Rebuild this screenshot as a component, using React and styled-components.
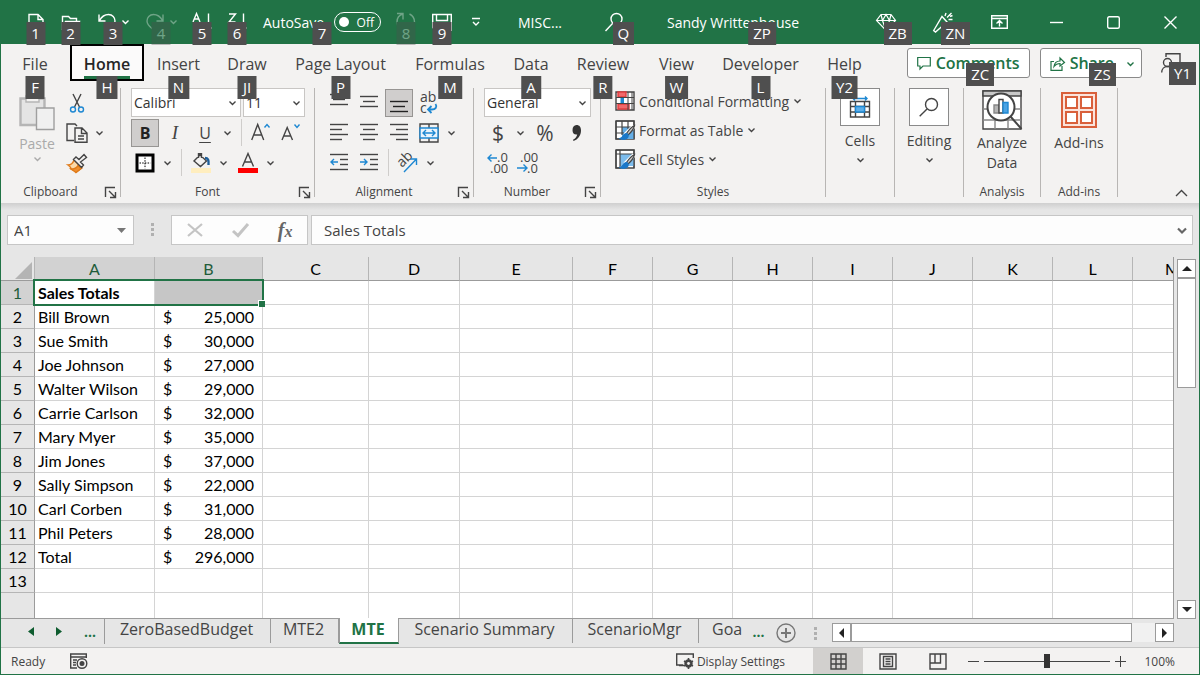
import React from 'react'
import styled, { createGlobalStyle, css } from 'styled-components'

const GREEN = '#217346'
const BLUE = '#1e88d2'

const tabs = [
    { name: 'File', tip: 'F', width: 68 },
    { name: 'Home', tip: 'H', width: 74 },
    { name: 'Insert', tip: 'N', width: 69 },
    { name: 'Draw', tip: 'JI', width: 68 },
    { name: 'Page Layout', tip: 'P', width: 119 },
    { name: 'Formulas', tip: 'M', width: 100 },
    { name: 'Data', tip: 'A', width: 62 },
    { name: 'Review', tip: 'R', width: 82 },
    { name: 'View', tip: 'W', width: 65 },
    { name: 'Developer', tip: 'L', width: 103 },
    { name: 'Help', tip: 'Y2', width: 65 },
]

const columns = [
    ['A', 120], ['B', 108], ['C', 106], ['D', 91], ['E', 113], ['F', 80],
    ['G', 80], ['H', 80], ['I', 80], ['J', 80], ['K', 80], ['L', 80],
    ['M', 80],
]

const rows = [
    ['Sales Totals', ''],
    ['Bill Brown', '25,000'],
    ['Sue Smith', '30,000'],
    ['Joe Johnson', '27,000'],
    ['Walter Wilson', '29,000'],
    ['Carrie Carlson', '32,000'],
    ['Mary Myer', '35,000'],
    ['Jim Jones', '37,000'],
    ['Sally Simpson', '22,000'],
    ['Carl Corben', '31,000'],
    ['Phil Peters', '28,000'],
    ['Total', '296,000'],
    ['', ''],
]

const sheets = [
    { name: 'ZeroBasedBudget', width: 166 },
    { name: 'MTE2', width: 68 },
    { name: 'MTE', width: 60, active: true },
    { name: 'Scenario Summary', width: 174 },
    { name: 'ScenarioMgr', width: 126 },
    { name: 'Goa', width: 46 },
]

function Icon({ w = 20, h = 20, children }) {
    return (
        <Svg width={w} height={h} viewBox={`0 0 ${w} ${h}`} aria-hidden="true">
            {children}
        </Svg>
    )
}

const Chevron = () => (
    <Icon w={9} h={6}><path d="M1.5 1.5l3 3 3-3" /></Icon>
)

const Launcher = () => (
    <LauncherButton aria-label="More options">
        <Icon w={11} h={11}>
            <path d="M.5 10V.5H10M4 4l6 6M10.500 5v5.500H5" />
        </Icon>
    </LauncherButton>
)

// horizontal rules, given as [y, x1, x2]
const Lines = ({ rules }) => (
    <>{rules.map(([y, a, b]) => <path key={y} d={`M${a} ${y}.5H${b}`} strokeWidth="1.400" />)}</>
)

const AlignIcon = ({ rules }) => <Icon><Lines rules={rules} /></Icon>

function TitleBar() {
    return (
        <TitleRow>
            <QuickButton $w={35} aria-label="New">
                <Icon><path d="M3 18V2.500h9l5 5V18zM12 2.500v5h5" /></Icon>
                <KeyTip>1</KeyTip>
            </QuickButton>
            <QuickButton $w={35} aria-label="Open">
                <Icon><path d="M1.500 17V4.500h6l2 2h6v3M1.500 17l3-7.500h14l-3 7.500z" /></Icon>
                <KeyTip>2</KeyTip>
            </QuickButton>
            <QuickButton $w={50} aria-label="Undo">
                <Icon><path d="M2 2.500v6.500h6.500M2.500 8.500C5 4 8 2.500 11.500 2.500c4 0 6.500 3 6.500 6.500 0 5-5 7-8 10" /></Icon>
                <Chevron />
                <KeyTip>3</KeyTip>
            </QuickButton>
            <QuickButton $w={46} $dim aria-label="Redo">
                <Icon><path d="M18 2.500v6.500h-6.500M17.500 8.500C15 4 12 2.500 8.500 2.500 4.500 2.500 2 5.500 2 9c0 5 5 7 8 10" /></Icon>
                <Chevron />
                <KeyTip>4</KeyTip>
            </QuickButton>
            <QuickButton $w={36} aria-label="Sort A to Z">
                <Icon><path d="M1 10l3.500-8.500L8 10M2.500 7h4M16.500 1.500v17l-3-3M16.500 18.500l3-3" /></Icon>
                <KeyTip>5</KeyTip>
            </QuickButton>
            <QuickButton $w={34} aria-label="Sort Z to A">
                <Icon><path d="M2 2h6.500L2 10h6.500M16.500 1.500v17l-3-3M16.500 18.500l3-3" /></Icon>
                <KeyTip>6</KeyTip>
            </QuickButton>
            <AutoSave>
                AutoSave
                <HiddenCheck type="checkbox" />
                <Pill><Knob />Off</Pill>
                <KeyTip>7</KeyTip>
            </AutoSave>
            <QuickButton $w={36} $dim aria-label="Refresh">
                <Icon w={22}><path d="M2 1.500h6v6M8 2C4 3 2 6 2 10c0 5 4 8.500 8.500 8.500S19.500 15 19.500 10c0-4-2-6.500-5-8" /></Icon>
                <KeyTip>8</KeyTip>
            </QuickButton>
            <QuickButton $w={36} aria-label="Save">
                <Icon><path d="M.7 2.500h18.600v15.800H3.500L.7 15.500zM4.500 2.500v6h11v-6M5 18v-6h10v6" /></Icon>
                <KeyTip>9</KeyTip>
            </QuickButton>
            <QuickButton $w={32} aria-label="Customize toolbar">
                <Icon w={10} h={10}><path d="M1 1.500h8M2 5l3 3 3-3" /></Icon>
            </QuickButton>
            <TitleMiddle>
                <span>MISC...</span>
                <QuickButton $w={20} aria-label="Search">
                    <Icon h={22}><circle cx="11.500" cy="8" r="5.500" /><path d="M7.500 12.500L.5 20" /></Icon>
                    <KeyTip $end>Q</KeyTip>
                </QuickButton>
                <UserButton>
                    Sandy Writtenhouse
                    <KeyTip>ZP</KeyTip>
                </UserButton>
            </TitleMiddle>
            <QuickButton $w={57} aria-label="Premium">
                <Icon><path d="M5 2.500h10l4.500 6L10 18.500.5 8.500zM.5 8.500h19M5 2.500l1.500 6L10 18.500l3.500-10 1.500-6M6.500 8.500L10 2.500l3.500 6" strokeWidth="1.200" /></Icon>
                <KeyTip $end>ZB</KeyTip>
            </QuickButton>
            <QuickButton $w={57} aria-label="What's new">
                <Icon h={22}><path d="M.7 19.500L9 5.500l5 5.500L2.500 21zM12 5l1-3M15.500 8.500h4M14 6.500l4.500-4.500M17 5.500l2.500-1" /></Icon>
                <KeyTip $end>ZN</KeyTip>
            </QuickButton>
            <QuickButton $w={57} aria-label="Ribbon display options">
                <Icon w={17} h={14}><path d="M.7.700h15.600v12.600H.700zM.7 3.500h15.600M8.500 11.500V5.500M5.500 8.500l3-3 3 3" /></Icon>
            </QuickButton>
            <QuickButton $w={57} aria-label="Minimize">
                <Icon w={13} h={13}><path d="M0 6.500h13" /></Icon>
            </QuickButton>
            <QuickButton $w={57} aria-label="Maximize">
                <Icon w={13} h={13}><rect x=".7" y=".7" width="11.600" height="11.600" rx="1.500" /></Icon>
            </QuickButton>
            <QuickButton $w={57} aria-label="Close">
                <Icon w={13} h={13}><path d="M.5.500l12 12M12.500.500l-12 12" /></Icon>
            </QuickButton>
        </TitleRow>
    )
}

function TabBar() {
    return (
        <TabRow>
            {tabs.map((t) => (
                <Tab key={t.name} $w={t.width} $active={t.name === 'Home'}>
                    <span>{t.name}</span>
                    <KeyTip $low>{t.tip}</KeyTip>
                </Tab>
            ))}
            <TabActions>
                <ActionBox>
                    <ActionButton>
                        <Icon w={14} h={14}><path d="M.7 1.500h12.600v8.500H6l-3 3v-3H.700z" strokeWidth="1.200" /></Icon>
                        Comments
                    </ActionButton>
                    <KeyTip $mid $end>ZC</KeyTip>
                </ActionBox>
                <ActionBox>
                    <ActionButton>
                        <Icon w={15} h={15}><path d="M4 5.500H1v8.800h11V10M4 10.500c.5-4 3-5.500 6-5.500V2l4.500 4.500L10 10V7.500c-3 0-4.500 1-6 3z" strokeWidth="1.200" /></Icon>
                        Share
                    </ActionButton>
                    <ShareArrow aria-label="Share options"><Chevron /></ShareArrow>
                    <KeyTip $mid $end>ZS</KeyTip>
                </ActionBox>
                <PersonButton aria-label="Account">
                    <Icon w={20} h={20}>
                        <path d="M5 4V.700h14v10.500h-3l-2 2.500" />
                        <circle cx="6.500" cy="9.500" r="4" />
                        <path d="M.7 19.500c0-3.500 2.500-6 5.800-6s5.800 2.500 5.800 6" />
                    </Icon>
                    <KeyTip $mid $end>Y1</KeyTip>
                </PersonButton>
            </TabActions>
        </TabRow>
    )
}

function ClipboardGroup() {
    return (
        <Group $w={120}>
            <GroupBody>
                <PasteButton disabled>
                    <Icon w={36} h={36}>
                        <path d="M1.500 3.500H25.500V30H1.500z" fill="#e4e4e4" stroke="#b5b5b5" strokeWidth="2.400" />
                        <path d="M7 1h13v6H7z" fill="#f3f2f1" stroke="#b5b5b5" />
                        <path d="M17.500 13h17.500v21.500H17.500z" fill="#f0f0f0" stroke="#9f9f9f" />
                    </Icon>
                    Paste
                    <Chevron />
                </PasteButton>
                <ToolRows>
                    <ToolRow>
                        <Tool aria-label="Cut">
                            <Icon>
                                <path d="M6 1l6.500 13M14 1L7.500 14" />
                                <g stroke={BLUE}><circle cx="6" cy="16.500" r="2.500" /><circle cx="14" cy="16.500" r="2.500" /></g>
                            </Icon>
                        </Tool>
                    </ToolRow>
                    <ToolRow>
                        <Tool aria-label="Copy">
                            <Icon w={22}>
                                <path d="M8 17.500H1V1h8l2 2" />
                                <path d="M9 5h7l5 5v9.300H9zM15.500 5v5.500H21M12 13h6M12 16h6" />
                            </Icon>
                        </Tool>
                        <DropArrow aria-label="Copy options"><Chevron /></DropArrow>
                    </ToolRow>
                    <ToolRow>
                        <Tool aria-label="Format painter">
                            <Icon>
                                <path d="M7 7l8 8-6 4.500c-1-2-3-3-5-3.500 0-1.500-1.500-3-3-4 3 0 5-2 6-5z" fill="#fbd9a8" stroke="#e07b1a" />
                                <path d="M4 16l5 3.500 5-4-3-3c-1 2-4 3.500-7 3.500z" fill="#ef8f2e" stroke="#e07b1a" />
                                <path d="M6.500 6.500l8 8 2-2.500-3-3 6-4.500-2.500-3-5 5-3-2.500z" fill="#f3f2f1" />
                            </Icon>
                        </Tool>
                    </ToolRow>
                </ToolRows>
            </GroupBody>
            <GroupLabel>Clipboard<Launcher /></GroupLabel>
        </Group>
    )
}

function FontGroup() {
    return (
        <Group $w={194}>
            <GroupBody>
                <ToolRows>
                    <ToolRow>
                        <SelectBox $w={110}>
                            <select aria-label="Font"><option>Calibri</option></select>
                            <Chevron />
                        </SelectBox>
                        <SelectBox $w={62}>
                            <select aria-label="Font size"><option>11</option></select>
                            <Chevron />
                        </SelectBox>
                    </ToolRow>
                    <ToolRow>
                        <Tool $on $letter="bold">B</Tool>
                        <Tool $letter="italic">I</Tool>
                        <Tool $letter="underline">U</Tool>
                        <DropArrow aria-label="Underline options"><Chevron /></DropArrow>
                        <Divider />
                        <Tool aria-label="Increase font size">
                            <Icon><path d="M.7 17L6.700 1.500 12.700 17M3 12h7.500" /><path d="M13.500 4.500l2.500-3 2.500 3" stroke={BLUE} /></Icon>
                        </Tool>
                        <Tool aria-label="Decrease font size">
                            <Icon><path d="M1 17L6.200 4.500 11.500 17M3 13h6.500" /><path d="M13.500 1.500l2.500 3 2.500-3" stroke={BLUE} /></Icon>
                        </Tool>
                    </ToolRow>
                    <ToolRow>
                        <Tool aria-label="Borders">
                            <Icon>
                                <rect x="2" y="2" width="16" height="16" fill="#fff" stroke="#000" strokeWidth="3" />
                                <path d="M10 4.500v11M4.500 10h11" stroke="#000" strokeDasharray="1.500 1.200" strokeWidth="1" />
                            </Icon>
                        </Tool>
                        <DropArrow aria-label="Border options"><Chevron /></DropArrow>
                        <Divider />
                        <Tool aria-label="Fill color">
                            <Icon>
                                <path d="M9 2l6.500 6-6 5.500L3 8zM7.500 5V.700h3V5" />
                                <path d="M14 5c3 0 4 2 3.500 7" stroke="#1f5f99" strokeWidth="2.400" />
                                <path d="M0 17.500h20" stroke="#ffeebf" strokeWidth="5" />
                            </Icon>
                        </Tool>
                        <DropArrow aria-label="Fill options"><Chevron /></DropArrow>
                        <Tool aria-label="Font color">
                            <Icon>
                                <path d="M4.500 13.500L10 .5l5.500 13M6.500 9h7" />
                                <path d="M0 17.500h20" stroke="#fe0000" strokeWidth="5" />
                            </Icon>
                        </Tool>
                        <DropArrow aria-label="Font color options"><Chevron /></DropArrow>
                    </ToolRow>
                </ToolRows>
            </GroupBody>
            <GroupLabel>Font<Launcher /></GroupLabel>
        </Group>
    )
}

function AlignmentGroup() {
    return (
        <Group $w={159}>
            <GroupBody>
                <ToolRows>
                    <ToolRow>
                        <Tool aria-label="Top align"><AlignIcon rules={[[1, 1, 19], [6, 4, 16], [11, 1, 19]]} /></Tool>
                        <Tool aria-label="Middle align"><AlignIcon rules={[[3, 1, 19], [8, 4, 16], [13, 1, 19]]} /></Tool>
                        <Tool $on aria-label="Bottom align"><AlignIcon rules={[[8, 1, 19], [13, 4, 16], [18, 1, 19]]} /></Tool>
                        <Tool aria-label="Wrap text">
                            <Icon w={20} h={24}>
                                <text x="1" y="11" fontSize="14">ab</text>
                                <text x="1" y="22" fontSize="14">c</text>
                                <path d="M16.500 13c2 3 0 5.500-3.500 5.500H9M12.500 15L9 18.500l3.500 3.500" stroke={BLUE} strokeWidth="1.800" />
                            </Icon>
                        </Tool>
                    </ToolRow>
                    <ToolRow>
                        <Tool aria-label="Align left"><AlignIcon rules={[[1, 1, 19], [6, 1, 13], [11, 1, 19], [16, 1, 13]]} /></Tool>
                        <Tool aria-label="Center"><AlignIcon rules={[[1, 1, 19], [6, 4, 16], [11, 1, 19], [16, 4, 16]]} /></Tool>
                        <Tool aria-label="Align right"><AlignIcon rules={[[1, 1, 19], [6, 7, 19], [11, 1, 19], [16, 7, 19]]} /></Tool>
                        <Tool aria-label="Merge and center">
                            <Icon>
                                <path d="M1 1h18v18H1zM10 1v4M10 15v4" />
                                <path d="M1 5h18v10H1z" fill="#eaf4fc" stroke={BLUE} />
                                <path d="M4 10h12M7 7l-3 3 3 3M13 7l3 3-3 3" stroke={BLUE} />
                            </Icon>
                        </Tool>
                        <DropArrow aria-label="Merge options"><Chevron /></DropArrow>
                    </ToolRow>
                    <ToolRow>
                        <Tool aria-label="Decrease indent">
                            <Icon><Lines rules={[[1, 1, 19], [6, 11, 19], [11, 11, 19], [16, 1, 19]]} /><path d="M2 9h7M5 6L2 9l3 3" stroke={BLUE} /></Icon>
                        </Tool>
                        <Tool aria-label="Increase indent">
                            <Icon><Lines rules={[[1, 1, 19], [6, 11, 19], [11, 11, 19], [16, 1, 19]]} /><path d="M1 9h7M5 6l3 3-3 3" stroke={BLUE} /></Icon>
                        </Tool>
                        <Divider />
                        <Tool aria-label="Orientation">
                            <Icon>
                                <text x="4" y="15" fontSize="14" transform="rotate(-45 4 15)">ab</text>
                                <path d="M6 19L18 6.500M12.500 6H18.500v6" stroke={BLUE} />
                            </Icon>
                        </Tool>
                        <DropArrow aria-label="Orientation options"><Chevron /></DropArrow>
                    </ToolRow>
                </ToolRows>
            </GroupBody>
            <GroupLabel>Alignment<Launcher /></GroupLabel>
        </Group>
    )
}

function NumberGroup() {
    return (
        <Group $w={127}>
            <GroupBody>
                <ToolRows>
                    <ToolRow>
                        <SelectBox $w={107}>
                            <select aria-label="Number format"><option>General</option></select>
                            <Chevron />
                        </SelectBox>
                    </ToolRow>
                    <ToolRow>
                        <Tool $letter="sign">$</Tool>
                        <DropArrow aria-label="Currency options"><Chevron /></DropArrow>
                        <Tool $letter="sign">%</Tool>
                        <Tool aria-label="Comma style">
                            <Icon>
                                <path d="M11.500 2c3 0 4.500 2.200 4.500 5.500C16 12.500 13 16.500 8.500 18L8 16.800c2.500-1.300 3.800-3 4.200-5.300-3 .5-4.700-1.500-4.700-4.300C7.500 4.200 9 2 11.500 2z" fill="#333" stroke="none" />
                            </Icon>
                        </Tool>
                    </ToolRow>
                    <ToolRow>
                        <Tool aria-label="Increase decimal">
                            <Icon w={22} h={24}>
                                <text x="10" y="11" fontSize="13">.0</text>
                                <text x="3" y="22" fontSize="13">.00</text>
                                <path d="M1 7h9M4.500 3.500L1 7l3.500 3.500" stroke={BLUE} />
                            </Icon>
                        </Tool>
                        <Tool aria-label="Decrease decimal">
                            <Icon w={22} h={24}>
                                <text x="3" y="11" fontSize="13">.00</text>
                                <text x="10" y="22" fontSize="13">.0</text>
                                <path d="M0 17h10M6.500 13.500L10 17l-3.500 3.500" stroke={BLUE} />
                            </Icon>
                        </Tool>
                    </ToolRow>
                </ToolRows>
            </GroupBody>
            <GroupLabel>Number<Launcher /></GroupLabel>
        </Group>
    )
}

function StylesGroup() {
    return (
        <Group $w={225}>
            <GroupBody>
                <StyleList>
                    <StyleButton>
                        <Icon>
                            <path d="M1 1h18v18H1z" fill="#fff" />
                            <path d="M3 1h8v5H3zM3 13h11v5H3z" fill="#f0696b" stroke="#e03c3f" />
                            <path d="M5.500 6.500v5.500H9V6.500z" fill={BLUE} stroke="none" />
                            <path d="M1 6.500h18M1 12.500h18M13 1v18M17 1v18" strokeWidth="1" />
                        </Icon>
                        Conditional Formatting
                        <Chevron />
                    </StyleButton>
                    <StyleButton>
                        <Icon>
                            <path d="M1 1h18v18H1z" fill="#fff" />
                            <path d="M7 7h12v12H7z" fill="#64aee6" stroke="none" />
                            <path d="M1 1h18v18M1 1v18h5M1 7h18M1 13h8M7 1v14M13 1v8" strokeWidth="1.200" />
                            <BrushPaths />
                        </Icon>
                        Format as Table
                        <Chevron />
                    </StyleButton>
                    <StyleButton>
                        <Icon>
                            <path d="M1 1h18v18H1z" fill="#fff" />
                            <path d="M5 5h14v12H5z" fill="#7cbcec" stroke="none" />
                            <path d="M1 1h18v18M1 1v18h5M1 5h18M5 1v18" strokeWidth="1.200" />
                            <BrushPaths />
                        </Icon>
                        Cell Styles
                        <Chevron />
                    </StyleButton>
                </StyleList>
            </GroupBody>
            <GroupLabel $plain>Styles</GroupLabel>
        </Group>
    )
}

const BrushPaths = () => (
    <>
        <path d="M19 6L10 15" stroke="#fff" strokeWidth="4" />
        <path d="M19.500 5.500c-3 1.500-6 5-8 8l1.500 1.500c3-2.500 5.500-5.500 6.500-9.500z" fill="#ccc" strokeWidth="1.200" />
        <path d="M11.500 13.500c-3 0-3 4-6 5 3 1.500 8 .5 7.500-3.500z" fill="#1b78c8" stroke="#1b78c8" />
    </>
)

function Ribbon() {
    return (
        <RibbonRow>
            <ClipboardGroup />
            <FontGroup />
            <AlignmentGroup />
            <NumberGroup />
            <StylesGroup />
            <Group $w={69}>
                <BigButton>
                    <IconFrame>
                        <Icon w={22} h={22}>
                            <path d="M1.500 5.500h19V21h-19zM1.500 10.500h19M1.500 16h19M6.500 5.500V21M15.500 5.500V21" />
                            <path d="M6.500 10.500h9V16h-9z" fill="#5fb0ea" stroke={BLUE} />
                            <path d="M4 2.500h14M6 .5l-2 2 2 2M16 .5l2 2-2 2" stroke={BLUE} />
                        </Icon>
                    </IconFrame>
                    Cells
                    <Chevron />
                </BigButton>
            </Group>
            <Group $w={69}>
                <BigButton>
                    <IconFrame>
                        <Icon><circle cx="12.500" cy="7.500" r="6" /><path d="M8 12L.700 19.300" /></Icon>
                    </IconFrame>
                    Editing
                    <Chevron />
                </BigButton>
            </Group>
            <Group $w={77}>
                <BigButton>
                    <IconSpace>
                        <Icon w={40} h={40}>
                            <path d="M1 1h38v38H1z" fill="#fff" />
                            <path d="M1 1h38v5H1z" fill="#c9c9c9" />
                            <path d="M1 19h38M1 30h38M13 30v9M26 30v9" stroke="#888" />
                            <circle cx="19" cy="17" r="13.500" fill="#fff" strokeWidth="2" />
                            <path d="M12 15h5v8h-5z" fill="#b5b5b5" stroke="#888" />
                            <path d="M17 9.500h4V23h-4z" fill="#fff" />
                            <path d="M21 12.500h5V23h-5z" fill="#4ba3e3" stroke={BLUE} />
                            <path d="M28.500 26.500L39.500 39" strokeWidth="2" />
                        </Icon>
                    </IconSpace>
                    Analyze<br />Data
                </BigButton>
                <GroupLabel $plain>Analysis</GroupLabel>
            </Group>
            <Group $w={77}>
                <BigButton>
                    <IconSpace>
                        <Icon w={36} h={36}>
                            <g stroke="#d9603b" strokeWidth="2">
                                <path d="M1 1h34v34H1z" fill="#fbe4dc" />
                                <path d="M5 5h11v11H5zM20 5h11v11H20zM5 20h11v11H5zM20 20h11v11H20z" fill="#fff" />
                            </g>
                        </Icon>
                    </IconSpace>
                    Add-ins
                </BigButton>
                <GroupLabel $plain>Add-ins</GroupLabel>
            </Group>
            <CollapseButton aria-label="Collapse the ribbon">
                <Icon w={13} h={8}><path d="M1 7l5.500-5.500L12 7" /></Icon>
            </CollapseButton>
        </RibbonRow>
    )
}

function FormulaBar() {
    return (
        <FormulaRow>
            <NameBox>
                <input aria-label="Name box" defaultValue="A1" />
                <Icon w={9} h={5}><path d="M0 0h9L4.500 5z" fill="#777" stroke="none" /></Icon>
            </NameBox>
            <Grip />
            <FormulaTools>
                <button aria-label="Cancel"><Icon w={16} h={14}><path d="M1 1l14 12M15 1L1 13" stroke="#c4c4c4" strokeWidth="2.200" /></Icon></button>
                <button aria-label="Enter"><Icon w={17} h={14}><path d="M1 8l5 4.500L16 1" stroke="#c4c4c4" strokeWidth="3" /></Icon></button>
                <FxButton aria-label="Insert function">f<small>x</small></FxButton>
            </FormulaTools>
            <FormulaInput>
                <input aria-label="Formula" defaultValue="Sales Totals" />
                <Icon w={10} h={7}><path d="M1 1.500l4 4 4-4" stroke="#666" strokeWidth="2.200" /></Icon>
            </FormulaInput>
        </FormulaRow>
    )
}

function Sheet() {
    return (
        <SheetArea>
            <GridWrap>
                <Grid>
                    <colgroup>
                        <col width={34} />
                        {columns.map(([name, width]) => <col key={name} width={width} />)}
                    </colgroup>
                    <thead>
                        <tr>
                            <Corner aria-label="Select all"><Icon w={17} h={17}><path d="M17 0v17H0z" fill="#b4b4b4" stroke="none" /></Icon></Corner>
                            {columns.map(([name], i) => <ColHead key={name} $on={i < 2}>{name}</ColHead>)}
                        </tr>
                    </thead>
                    <tbody>
                        {rows.map(([label, amount], r) => (
                            <tr key={r}>
                                <RowHead $on={r === 0}>{r + 1}</RowHead>
                                <Cell $bold={r === 0}>
                                    {label}
                                    {r === 0 && <Selection />}
                                </Cell>
                                <Cell $fill={r === 0}>
                                    {amount && <Money><span>$</span><span>{amount}</span></Money>}
                                </Cell>
                                {columns.slice(2).map(([name]) => <Cell key={name} />)}
                            </tr>
                        ))}
                        <FillerRow>
                            <RowHead />
                            {columns.map(([name]) => <Cell key={name} />)}
                        </FillerRow>
                    </tbody>
                </Grid>
            </GridWrap>
            <VScroll>
                <ScrollButton aria-label="Scroll up"><Icon w={10} h={5}><path d="M5 0l5 5H0z" fill="#222" stroke="none" /></Icon></ScrollButton>
                <VThumb />
                <ScrollButton aria-label="Scroll down"><Icon w={10} h={5}><path d="M0 0h10L5 5z" fill="#222" stroke="none" /></Icon></ScrollButton>
            </VScroll>
        </SheetArea>
    )
}

function SheetTabs() {
    return (
        <SheetTabRow>
            <SheetNav>
                <button aria-label="Previous sheet"><Icon w={6} h={9}><path d="M6 0v9L0 4.500z" fill="#0e5c2f" stroke="none" /></Icon></button>
                <button aria-label="Next sheet"><Icon w={6} h={9}><path d="M0 0v9l6-4.500z" fill="#0e5c2f" stroke="none" /></Icon></button>
                <button>...</button>
            </SheetNav>
            {sheets.map((s) => <SheetTab key={s.name} $w={s.width} $active={s.active}>{s.name}</SheetTab>)}
            <MoreSheets>...</MoreSheets>
            <AddSheet aria-label="New sheet">
                <Icon><circle cx="10" cy="10" r="9" stroke="#777" /><path d="M10 5v10M5 10h10" stroke="#777" strokeWidth="2" /></Icon>
            </AddSheet>
            <Grip />
            <HScroll>
                <ScrollButton aria-label="Scroll left"><Icon w={5} h={10}><path d="M5 0v10L0 5z" fill="#222" stroke="none" /></Icon></ScrollButton>
                <HThumb />
                <ScrollButton aria-label="Scroll right"><Icon w={5} h={10}><path d="M0 0v10l5-5z" fill="#222" stroke="none" /></Icon></ScrollButton>
            </HScroll>
        </SheetTabRow>
    )
}

function StatusBar() {
    return (
        <StatusRow>
            <span>Ready</span>
            <StatusButton aria-label="Record macro">
                <Icon w={18} h={16}>
                    <path d="M7 15H.700V1h15.600v4M.7 4h15.600M3 7h4M3 9.500h3M3 12h3" />
                    <circle cx="12" cy="10.500" r="4.800" /><circle cx="12" cy="10.500" r="1.800" fill="#444" />
                </Icon>
            </StatusButton>
            <DisplaySettings>
                <Icon w={18} h={16}>
                    <path d="M7 12H.700V1h16.600v4M3 12.500h5" />
                    <circle cx="12.500" cy="10.500" r="3" strokeWidth="2.400" />
                    <path d="M12.500 5v11M8 8l9 5M17 8l-9 5" strokeWidth="1.600" />
                    <circle cx="12.500" cy="10.500" r="1.400" fill="#f3f2f1" stroke="none" />
                </Icon>
                Display Settings
            </DisplaySettings>
            <ViewButton $on aria-label="Normal">
                <Icon w={17} h={17}><path d="M1 1h15v15H1zM1 6h15M1 11h15M6 1v15M11 1v15" /></Icon>
            </ViewButton>
            <ViewButton aria-label="Page layout">
                <Icon w={18} h={17}><path d="M1 1h16v15H1zM4.500 3.500h9v10h-9zM6.500 6h5M6.500 8.500h5M6.500 11h5" /></Icon>
            </ViewButton>
            <ViewButton aria-label="Page break preview">
                <Icon w={18} h={17}><path d="M1 1h16v15H1zM1 10h10.500V1M6 1v9" /></Icon>
            </ViewButton>
            <ZoomStep aria-label="Zoom out"><Icon w={11} h={11}><path d="M0 5.500h11" strokeWidth="1" /></Icon></ZoomStep>
            <ZoomRange type="range" min="0" max="100" defaultValue="50" aria-label="Zoom" />
            <ZoomStep aria-label="Zoom in"><Icon w={11} h={11}><path d="M0 5.500h11M5.500 0v11" strokeWidth="1" /></Icon></ZoomStep>
            <ZoomValue>100%</ZoomValue>
        </StatusRow>
    )
}

export default function App() {
    return (
        <Window>
            <GlobalStyle />
            <TitleBar />
            <TabBar />
            <Ribbon />
            <FormulaBar />
            <Sheet />
            <SheetTabs />
            <StatusBar />
        </Window>
    )
}

const GlobalStyle = createGlobalStyle`
    * {
        box-sizing: border-box;
    }
    body {
        margin: 0;
        font-family: "Open Sans", "Noto Sans", sans-serif;
        font-size: 14px;
        color: #444;
    }
    button, input, select {
        font: inherit;
        color: inherit;
        background: none;
        border: 0;
        margin: 0;
        padding: 0;
        border-radius: 0;
    }
`

const Window = styled.main`
    display: flex;
    flex-direction: column;
    height: 100vh;
    overflow: hidden;
    background: #e6e6e6;
    border: 1px solid ${GREEN};
    border-top: 0;
`

const Svg = styled.svg`
    display: block;
    flex: none;
    overflow: visible;
    fill: none;
    stroke: currentColor;
    stroke-width: 1.4px;

    text {
        fill: #444;
        stroke: none;
    }
`

const KeyTip = styled.span`
    position: absolute;
    z-index: 5;
    top: 22px;
    left: 50%;
    height: 23px;
    min-width: 19px;
    padding: 0 5px;
    background: #4f4f4f;
    color: #fff;
    font-size: 15px;
    font-weight: 400;
    line-height: 23px;
    text-align: center;
    white-space: nowrap;
    transform: translateX(${(p) => (p.$end ? '-2px' : '-50%')});
    ${(p) => p.$low && css`top: 32px;`}
    ${(p) => p.$mid && css`top: 14px;`}
`

/* title bar */

const TitleRow = styled.header`
    display: flex;
    align-items: center;
    flex: none;
    height: 44px;
    padding-left: 17px;
    background: ${GREEN};
    color: #fff;
`

const QuickButton = styled.button`
    position: relative;
    display: flex;
    align-items: center;
    justify-content: center;
    gap: 4px;
    flex: none;
    width: ${(p) => p.$w}px;
    height: 44px;
    opacity: ${(p) => (p.$dim ? 0.35 : 1)};
`

const AutoSave = styled.label`
    position: relative;
    display: flex;
    align-items: center;
    justify-content: space-between;
    flex: none;
    width: 118px;
    height: 44px;
    margin: 0 7px 0 9px;
`

const HiddenCheck = styled.input`
    appearance: none;
    width: 0;
    height: 0;
`

const Pill = styled.span`
    display: flex;
    align-items: center;
    justify-content: space-between;
    width: 47px;
    height: 20px;
    padding: 0 6px 0 4px;
    border: 1px solid #fff;
    border-radius: 10px;
    font-size: 12px;
`

const Knob = styled.span`
    width: 10px;
    height: 10px;
    border-radius: 50%;
    background: #fff;
`

const TitleMiddle = styled.div`
    display: flex;
    align-items: center;
    justify-content: space-between;
    flex: 1;
    min-width: 0;
    padding-left: 26px;
`

const UserButton = styled.button`
    position: relative;
    flex: none;
    width: 190px;
    height: 44px;
    text-align: left;
`

/* ribbon tabs */

const TabRow = styled.nav`
    display: flex;
    flex: none;
    height: 38px;
    background: #f3f2f1;
`

const Tab = styled.button`
    position: relative;
    flex: none;
    width: ${(p) => p.$w}px;
    height: 38px;
    padding-top: 2px;
    font-size: 16px;
    white-space: nowrap;

    ${(p) => p.$active && css`
        height: 37px;
        margin-left: 1px;
        padding: 0;
        background: #fbfafa;
        border: 2px solid #000;
        color: #262626;
        font-weight: 600;

        > span:first-child {
            display: inline-block;
            height: 33px;
            line-height: 36px;
            border-bottom: 3px solid ${GREEN};
        }
        ${KeyTip} {
            top: 30px;
        }
    `}
`

const TabActions = styled.div`
    display: flex;
    align-items: flex-start;
    gap: 10px;
    margin-left: auto;
    padding: 4px 11px 0 0;
`

const ActionBox = styled.div`
    position: relative;
    display: flex;
    height: 30px;
    background: #fff;
    border: 1px solid #8a8a8a;
    border-radius: 3px;
    color: ${GREEN};
`

const ActionButton = styled.button`
    display: flex;
    align-items: center;
    gap: 5px;
    height: 28px;
    padding: 0 9px;
    font-size: 16px;
    font-weight: 600;
`

const ShareArrow = styled.button`
    padding: 1px 6px 0 3px;
`

const PersonButton = styled.button`
    position: relative;
    display: flex;
    align-items: center;
    justify-content: center;
    width: 34px;
    height: 30px;
    margin-left: 2px;
`

/* ribbon */

const RibbonRow = styled.section`
    display: flex;
    flex: none;
    height: 121px;
    padding: 6px 0;
    background: #f3f2f1;
`

const Group = styled.div`
    display: flex;
    flex-direction: column;
    flex: none;
    width: ${(p) => p.$w}px;
    height: 109px;
    border-right: 1px solid #b8b6b4;
`

const GroupBody = styled.div`
    display: flex;
    flex: 1;
    padding-left: 10px;
`

const GroupLabel = styled.div`
    position: relative;
    margin: auto 0 -2px;
    padding-right: ${(p) => (p.$plain ? 0 : 20)}px;
    font-size: 12px;
    line-height: 14px;
    text-align: center;
`

const LauncherButton = styled.button`
    position: absolute;
    right: 4px;
    top: 2px;
`

const ToolRows = styled.div`
    display: flex;
    flex-direction: column;
    gap: 1px;
`

const ToolRow = styled.div`
    display: flex;
    align-items: center;
    gap: 2px;
    height: 29px;
`

const letters = {
    bold: css`font-weight: 700;`,
    italic: css`font-family: "Liberation Serif", serif; font-style: italic; font-size: 19px;`,
    underline: css`text-decoration: underline; text-underline-offset: 3px;`,
    sign: css`font-size: 21px; line-height: 28px;`,
}

const Tool = styled.button`
    display: flex;
    align-items: center;
    justify-content: center;
    flex: none;
    width: 28px;
    height: 28px;
    font-size: 16px;
    ${(p) => letters[p.$letter]}
    ${(p) => p.$on && css`
        background: #d0cecd;
        border: 1px solid #979593;
        color: #222;
    `}
`

const DropArrow = styled.button`
    display: flex;
    align-items: center;
    justify-content: center;
    flex: none;
    width: 18px;
    height: 28px;
    margin-left: -3px;
`

const Divider = styled.span`
    width: 1px;
    height: 27px;
    margin: 0 3px;
    background: #cfcdcb;
`

const SelectBox = styled.span`
    display: flex;
    align-items: center;
    width: ${(p) => p.$w}px;
    height: 29px;
    padding-right: 3px;
    background: #fff;
    border: 1px solid #c8c6c4;

    select {
        appearance: none;
        flex: 1;
        min-width: 0;
        padding-left: 2px;
        font-size: 14px;
        color: #333;
    }
`

const PasteButton = styled.button`
    display: flex;
    flex-direction: column;
    align-items: center;
    align-self: flex-start;
    width: 52px;
    padding-top: 7px;
    line-height: 25px;
    color: #aaa;
`

const StyleList = styled.div`
    display: flex;
    flex-direction: column;
    gap: 3px;
`

const StyleButton = styled.button`
    display: flex;
    align-items: center;
    gap: 4px;
    height: 26px;
    padding-left: 4px;
    white-space: nowrap;
`

const BigButton = styled.button`
    display: flex;
    flex-direction: column;
    align-items: center;
    line-height: 20px;
`

const IconFrame = styled.span`
    display: flex;
    align-items: center;
    justify-content: center;
    width: 40px;
    height: 38px;
    margin-bottom: 5px;
    background: #fff;
    border: 1px solid #8a8a8a;

    ~ svg {
        margin-top: 6px;
    }
`

const IconSpace = styled.span`
    display: flex;
    align-items: center;
    justify-content: center;
    height: 44px;
    margin-bottom: 1px;
`

const CollapseButton = styled.button`
    align-self: flex-end;
    margin: 0 11px 0 auto;
`

/* formula bar */

const FormulaRow = styled.div`
    display: flex;
    align-items: flex-start;
    flex: none;
    height: 54px;
    padding: 12px 6px 0;
    background: linear-gradient(#cfcfcf, #e6e6e6 7px);
`

const box = css`
    display: flex;
    align-items: center;
    height: 30px;
    background: #fdfdfd;
    border: 1px solid #c6c6c6;
`

const NameBox = styled.div`
    ${box}
    width: 127px;
    padding: 0 7px 0 6px;

    input {
        flex: 1;
        min-width: 0;
        font-size: 15px;
    }
`

const Grip = styled.span`
    align-self: center;
    flex: none;
    width: 3px;
    height: 13px;
    margin: 0 15px 0 14px;
    background: repeating-linear-gradient(#b0b0b0 0 3px, transparent 3px 5px);

    ${FormulaRow} & {
        align-self: flex-start;
        margin: 8px 17px 0;
    }
`

const FormulaTools = styled.div`
    ${box}
    justify-content: space-around;
    width: 137px;
    margin-right: 3px;
`

const FxButton = styled.button`
    font-family: "Liberation Serif", serif;
    font-size: 20px;
    font-style: italic;
    font-weight: 700;
    color: #666;

    small {
        font-size: 16px;
    }
`

const FormulaInput = styled.div`
    ${box}
    flex: 1;
    padding: 0 5px 0 12px;

    input {
        flex: 1;
        min-width: 0;
        font-size: 15px;
    }
`

/* sheet */

const SheetArea = styled.section`
    display: flex;
    flex: 1;
    min-height: 0;
`

const GridWrap = styled.div`
    flex: 1;
    min-width: 0;
    overflow: hidden;
    border-right: 1px solid #9b9b9b;
    border-bottom: 1px solid #9b9b9b;
`

const Grid = styled.table`
    table-layout: fixed;
    width: 100%;
    height: 100%;
    border-collapse: separate;
    border-spacing: 0;
    font-family: Lato, sans-serif;
    font-size: 16px;
    line-height: 20px;
    color: #000;
`

const ColHead = styled.th`
    height: 24px;
    padding: 0;
    background: ${(p) => (p.$on ? '#d2d2d2' : '#e6e6e6')};
    border-right: 1px solid #b5b5b5;
    border-bottom: 1px solid #9b9b9b;
    color: ${(p) => (p.$on ? '#1f5c3a' : '#000')};
    font-weight: 400;
`

const Corner = styled(ColHead)`
    ${Svg} {
        margin: 4px 2px 0 auto;
    }
`

const RowHead = styled.th`
    height: 24px;
    padding: 0;
    background: ${(p) => (p.$on ? '#d2d2d2' : '#e6e6e6')};
    border-right: 1px solid #9b9b9b;
    border-bottom: 1px solid #b5b5b5;
    color: ${(p) => (p.$on ? '#1f5c3a' : '#000')};
    font-weight: 400;
`

const Cell = styled.td`
    position: relative;
    height: 24px;
    padding: 0 8px 0 3px;
    background: ${(p) => (p.$fill ? '#c6c6c6' : '#fff')};
    border-right: 1px solid #d4d4d4;
    border-bottom: 1px solid #d4d4d4;
    font-weight: ${(p) => (p.$bold ? 700 : 400)};
    white-space: nowrap;
`

const FillerRow = styled.tr`
    td, th {
        height: auto;
        border-bottom: 0;
    }
`

const Money = styled.span`
    display: flex;
    justify-content: space-between;
    padding-left: 5px;
`

const Selection = styled.span`
    position: absolute;
    z-index: 2;
    top: -2px;
    left: -2px;
    width: 231px;
    height: 27px;
    border: 2px solid ${GREEN};

    &::after {
        content: "";
        position: absolute;
        right: -3px;
        bottom: -3px;
        width: 6px;
        height: 6px;
        background: ${GREEN};
        border: 1px solid #fff;
        border-width: 1px 0 0 1px;
    }
`

const ScrollButton = styled.button`
    display: flex;
    align-items: center;
    justify-content: center;
    flex: none;
    width: 19px;
    height: 19px;
    background: #fff;
    border: 1px solid #9b9b9b;
`

const VScroll = styled.div`
    display: flex;
    flex-direction: column;
    width: 25px;
    padding: 2px 3px 0;
`

const VThumb = styled.div`
    flex: none;
    height: 110px;
    margin-bottom: auto;
    background: #fff;
    border: 1px solid #9b9b9b;
`

/* sheet tabs */

const SheetTabRow = styled.nav`
    display: flex;
    align-items: flex-start;
    flex: none;
    height: 28px;
`

const SheetNav = styled.div`
    display: flex;
    align-items: center;
    justify-content: space-between;
    width: 104px;
    height: 25px;
    padding: 0 8px 0 27px;
    border-right: 1px solid #9b9b9b;

    button {
        color: ${GREEN};
        font-weight: 700;
    }
`

const SheetTab = styled.button`
    display: flex;
    justify-content: center;
    flex: none;
    width: ${(p) => p.$w}px;
    height: 24px;
    padding-right: 2px;
    border-right: 1px solid #9b9b9b;
    font-size: 16px;
    line-height: 20px;
    white-space: nowrap;

    &:nth-last-of-type(3) {
        border-right: 0;
        padding-left: 13px;
        justify-content: flex-start;
    }
    ${(p) => p.$active && css`
        height: 26px;
        margin-top: -1px;
        background: #fff;
        border-left: 1px solid #9b9b9b;
        border-bottom: 2px solid ${GREEN};
        color: ${GREEN};
        font-weight: 700;
        line-height: 22px;
    `}
`

const MoreSheets = styled.button`
    width: 27px;
    height: 25px;
    color: ${GREEN};
    font-weight: 700;
`

const AddSheet = styled.button`
    padding: 4px 4px 0;
`

const HScroll = styled.div`
    display: flex;
    flex: 1;
    margin: 4px 25px 0 0;
    background: #f1f1f1;
`

const HThumb = styled.div`
    flex: 1;
    margin-right: 23px;
    background: #fff;
    border: 1px solid #9b9b9b;
`

/* status bar */

const StatusRow = styled.footer`
    display: flex;
    align-items: center;
    flex: none;
    height: 27px;
    padding: 0 24px 0 10px;
    background: #f3f2f1;
    border-top: 1px solid #c6c6c6;
    font-size: 12px;
`

const StatusButton = styled.button`
    margin-left: 25px;
`

const DisplaySettings = styled.button`
    display: flex;
    align-items: center;
    gap: 3px;
    margin: 0 28px 0 auto;
`

const ViewButton = styled.button`
    display: flex;
    align-items: center;
    justify-content: center;
    width: 50px;
    height: 26px;
    background: ${(p) => (p.$on ? '#d2d0ce' : 'none')};
`

const ZoomStep = styled.button`
    padding: 0 5px;
`

const ZoomRange = styled.input`
    appearance: none;
    width: 126px;
    height: 15px;
    background: linear-gradient(#444, #444) center / 100% 1px no-repeat;

    &::-webkit-slider-thumb {
        appearance: none;
        width: 6px;
        height: 14px;
        background: #333;
    }
`

const ZoomValue = styled.span`
    width: 44px;
    text-align: right;
`
